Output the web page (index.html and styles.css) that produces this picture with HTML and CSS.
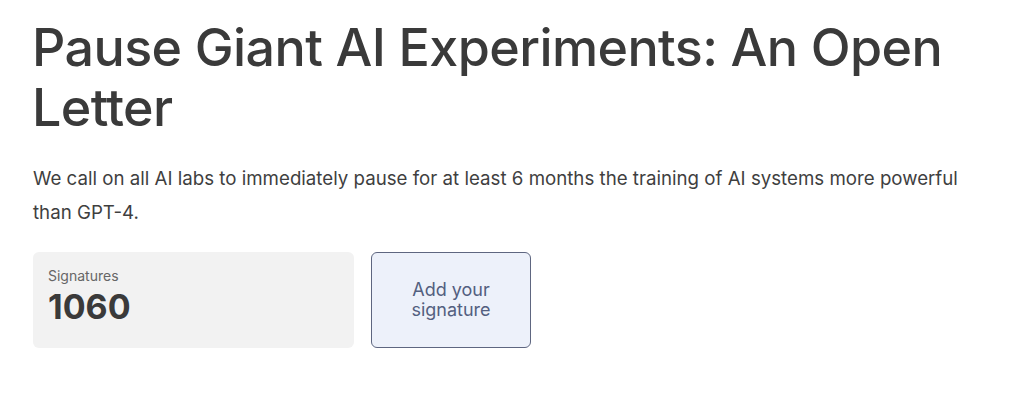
FILE: index.html
```html
<!DOCTYPE html>
<html>
<head>
<meta charset="utf-8">
<link rel="stylesheet" href="styles.css">
</head>
<body>
<main class="page">
  <h1 class="title">Pause Giant AI Experiments: An Open Letter</h1>
  <p class="lede">We call on all AI labs to immediately pause for at least 6 months the training of AI systems more powerful than GPT-4.</p>
  <div class="actions">
    <div class="count-card">
      <div class="count-label">Signatures</div>
      <div class="count-value">1060</div>
    </div>
    <button class="sign-btn">Add your<br>signature</button>
  </div>
</main>
</body>
</html>
```
FILE: styles.css
```css
* { box-sizing: border-box; }
html, body { margin: 0; padding: 0; background: #fff; }
body { font-family: Inter, "Noto Sans", sans-serif; color: #3a3a3a; }
.page { padding: 18px 33px 0 32px; width: 1000px; }
.title {
  margin: 0;
  font-size: 52px;
  font-weight: 500;
  line-height: 60px;
  letter-spacing: -0.6px;
  color: #3a3a3a;
}
.lede {
  margin: 24px 0 0 1px;
  font-size: 18.7px;
  line-height: 34px;
  color: #3f3f3f;
  font-weight: 400;
}
.actions { display: flex; gap: 17px; margin-top: 22px; margin-left: 1px; }
.count-card {
  width: 321px;
  height: 96px;
  background: #f2f2f2;
  border-radius: 6px;
  padding: 15px 15px;
}
.count-label { font-size: 14px; color: #666; line-height: 18px; }
.count-value { font-size: 34px; font-weight: 650; color: #3a3a3a; line-height: 40px; margin-top: 2px; }
.sign-btn {
  width: 160px;
  height: 96px;
  background: #edf1fa;
  border: 1px solid #5e6680;
  border-radius: 6px;
  font-family: Inter, "Noto Sans", sans-serif;
  font-size: 18px;
  line-height: 20px;
  color: #535f80;
  padding: 0;
}
```
